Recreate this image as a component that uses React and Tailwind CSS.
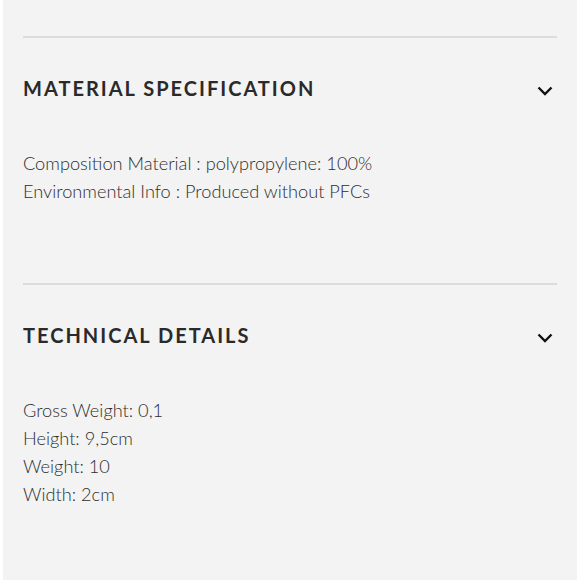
import React from 'react';

const sections = [
  {
    title: 'MATERIAL SPECIFICATION',
    lines: ['Composition Material : polypropylene: 100%', 'Environmental Info : Produced without PFCs'],
    bottom: 'pb-[78px]',
  },
  {
    title: 'TECHNICAL DETAILS',
    lines: ['Gross Weight: 0,1', 'Height: 9,5cm', 'Weight: 10', 'Width: 2cm'],
    bottom: 'pb-[80px]',
  },
];

function Chevron() {
  return (
    <svg width="16" height="10" viewBox="0 0 16 10" className="mt-[6px] mr-[4px]">
      <polyline points="1.5,1.5 8,8 14.5,1.5" fill="none" stroke="#111" strokeWidth="2.4" />
    </svg>
  );
}

export default function App() {
  return (
    <div className="w-[580px] h-[580px] bg-white px-[3px] overflow-hidden" style={{ fontFamily: 'Lato, "Open Sans", sans-serif' }}>
      <div className="h-full bg-[#f3f3f3] px-[20px] pt-[36px]">
        {sections.map((s) => (
          <div key={s.title} className={`border-t-2 border-[#dcdcdc] ${s.bottom}`}>
            <div className="flex items-center justify-between pt-[38px]">
              <h3 className="text-[20px] leading-[24px] font-bold tracking-[0.1em] text-[#2a2a2a]">{s.title}</h3>
              <Chevron />
            </div>
            <div className="mt-[49px]">
              {s.lines.map((l) => (
                <p key={l} className="text-[18.2px] leading-[28px] font-light text-[#2e2e2e]">{l}</p>
              ))}
            </div>
          </div>
        ))}
      </div>
    </div>
  );
}
